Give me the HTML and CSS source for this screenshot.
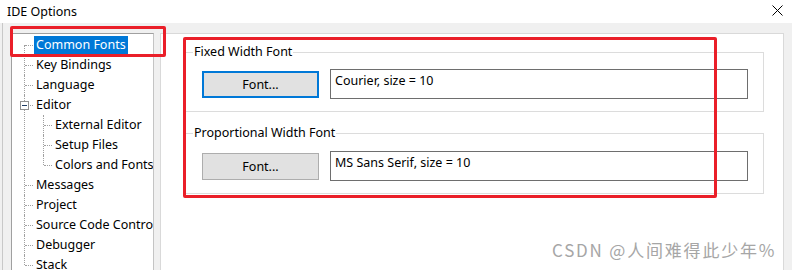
FILE: index.html
```html
<!DOCTYPE html>
<html lang="en">
<head>
    <meta charset="UTF-8">
    <title>IDE Options</title>
    <link rel="stylesheet" href="styles.css">
</head>
<body>

<div class="titlebar">
    <span class="title">IDE Options</span>
    <svg class="close" width="11" height="11" viewBox="0 0 11 11">
        <path d="M0.5 0.5 L10.5 10.5 M10.5 0.5 L0.5 10.5" stroke="#000" stroke-width="1" fill="none"/>
    </svg>
</div>

<div class="main">
    <!-- Category tree -->
    <div class="tree">
        <ul class="nodes">
            <li><span class="label selected">Common Fonts</span></li>
            <li><span class="label">Key Bindings</span></li>
            <li><span class="label">Language</span></li>
            <li>
                <span class="toggle"></span>
                <span class="label">Editor</span>
                <ul>
                    <li><span class="label">External Editor</span></li>
                    <li><span class="label">Setup Files</span></li>
                    <li><span class="label">Colors and Fonts</span></li>
                </ul>
            </li>
            <li><span class="label">Messages</span></li>
            <li><span class="label">Project</span></li>
            <li><span class="label">Source Code Control</span></li>
            <li><span class="label">Debugger</span></li>
            <li><span class="label">Stack</span></li>
        </ul>
    </div>

    <!-- Settings page -->
    <div class="panel">
        <fieldset class="group">
            <legend>Fixed Width Font</legend>
            <div class="font-row">
                <button class="font-btn focused">Font...</button>
                <div class="font-value">Courier, size = 10</div>
            </div>
        </fieldset>
        <fieldset class="group">
            <legend>Proportional Width Font</legend>
            <div class="font-row">
                <button class="font-btn">Font...</button>
                <div class="font-value">MS Sans Serif, size = 10</div>
            </div>
        </fieldset>
    </div>
</div>

<!-- annotation marks drawn over the screenshot -->
<div class="mark mark-tree"></div>
<div class="mark mark-panel"></div>
<div class="watermark">CSDN @人间难得此少年%</div>

</body>
</html>
```

FILE: styles.css
```css
body {
    margin: 0;
    width: 792px;
    height: 270px;
    overflow: hidden;
    position: relative;
    background-color: #f0f0f0;
    font-family: "Noto Sans", "Noto Sans CJK SC", sans-serif;
    font-size: 12.5px;
    color: #000;
}
.titlebar {
    height: 23px;
    background-color: #fff;
    display: flex;
    align-items: center;
    justify-content: space-between;
    padding: 0 9px 0 7px;
}
.title {
    line-height: 16px;
}
.close {
    display: block;
    margin-top: -2px;
}
.main {
    display: flex;
    gap: 6px;
    margin-left: 2px;
    border-left: 1px solid #c8c8c8;
    padding: 10px 0 0 8px;
    height: 247px;
    box-sizing: border-box;
}
.tree {
    width: 143px;
    flex-shrink: 0;
    box-sizing: border-box;
    background-color: #fff;
    border: 1px solid #a0a0a0;
    border-right-color: #c4c4c4;
    border-bottom: none;
    padding-top: 1px;
    overflow: hidden;
    white-space: nowrap;
}
.nodes,
.nodes ul {
    list-style: none;
    margin: 0;
    padding: 0;
}
.nodes ul {
    margin-left: -3px;
}
.nodes li {
    position: relative;
    padding-left: 22px;
    line-height: 20px;
}
.nodes li::after {
    content: '';
    position: absolute;
    left: 12px;
    top: 0;
    bottom: 0;
    border-left: 1px dotted #a0a0a0;
}
.nodes li::before {
    content: '';
    position: absolute;
    left: 13px;
    top: 10px;
    width: 8px;
    border-top: 1px dotted #a0a0a0;
}
.nodes > li:first-child::after {
    top: 10px;
}
.nodes li:last-child::after {
    bottom: auto;
    height: 10px;
}
.label {
    display: inline-block;
    vertical-align: top;
    line-height: 16px;
    padding: 1px 2px;
    margin: 1px 0;
}
.label.selected {
    background-color: #0078d7;
    color: #fff;
}
.toggle {
    position: absolute;
    left: 8px;
    top: 6px;
    width: 9px;
    height: 9px;
    box-sizing: border-box;
    border: 1px solid #919191;
    background-color: #fff;
    z-index: 1;
}
.toggle::after {
    content: '';
    position: absolute;
    left: 1px;
    top: 3px;
    width: 5px;
    border-top: 1px solid #1e3c64;
}
.panel {
    width: 624px;
    flex-shrink: 0;
    box-sizing: border-box;
    background-color: #fff;
    border: 1px solid #d9d9d9;
    border-bottom: none;
    padding: 10px 19px 0 24px;
}
.group {
    margin: 0 0 13px 0;
    border: 1px solid #dcdcdc;
    padding: 9px 15px 12px 7px;
    min-width: 0;
}
.group + .group {
    padding-top: 10px;
}
.group legend {
    padding: 0 1px;
    line-height: 16px;
}
.font-row {
    display: flex;
    align-items: center;
    gap: 11px;
    padding-left: 9px;
}
.font-btn {
    width: 117px;
    height: 27px;
    flex-shrink: 0;
    font-family: inherit;
    font-size: 12.5px;
    color: #000;
    background-color: #e1e1e1;
    border: 1px solid #adadad;
    padding: 0;
}
.font-btn.focused {
    border: 2px solid #0078d7;
}
.font-value {
    flex: 1;
    height: 30px;
    box-sizing: border-box;
    border: 1px solid #6e6e6e;
    padding: 3px 4px;
    line-height: 16px;
}
.mark {
    position: absolute;
    border: 3px solid #ea1f29;
    border-radius: 2px;
    box-sizing: border-box;
}
.mark-tree {
    left: 10px;
    top: 26px;
    width: 156px;
    height: 31px;
}
.mark-panel {
    left: 183px;
    top: 37px;
    width: 534px;
    height: 161px;
}
.watermark {
    position: absolute;
    left: 552px;
    top: 240px;
    font-family: "Noto Sans CJK SC", sans-serif;
    font-size: 17px;
    letter-spacing: 1.8px;
    line-height: 20px;
    color: #a6a6a6;
    text-shadow: 0 0 2px #fff;
}
```
